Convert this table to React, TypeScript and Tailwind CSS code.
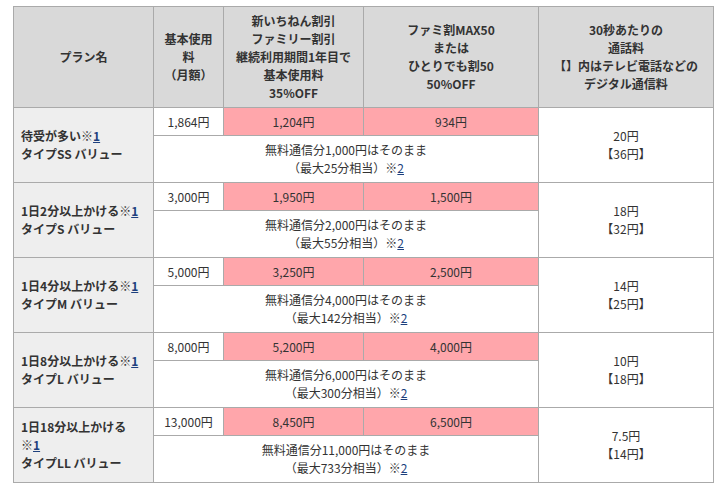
import React from 'react';

type Plan = {
  name: React.ReactNode;
  base: string;
  first: string;
  fami: string;
  free: string;
  max: string;
  call: string;
  digital: string;
};

const Ref = ({ n }: { n: number }) => (
  <>
    ※<a href="#" className="text-[#1d3f7d] underline">{n}</a>
  </>
);

const plans: Plan[] = [
  { name: <>待受が多い<Ref n={1} /><br />タイプSS バリュー</>, base: '1,864円', first: '1,204円', fami: '934円', free: '1,000', max: '25', call: '20円', digital: '36円' },
  { name: <>1日2分以上かける<Ref n={1} /><br />タイプS バリュー</>, base: '3,000円', first: '1,950円', fami: '1,500円', free: '2,000', max: '55', call: '18円', digital: '32円' },
  { name: <>1日4分以上かける<Ref n={1} /><br />タイプM バリュー</>, base: '5,000円', first: '3,250円', fami: '2,500円', free: '4,000', max: '142', call: '14円', digital: '25円' },
  { name: <>1日8分以上かける<Ref n={1} /><br />タイプL バリュー</>, base: '8,000円', first: '5,200円', fami: '4,000円', free: '6,000', max: '300', call: '10円', digital: '18円' },
  { name: <>1日18分以上かける<br /><Ref n={1} /><br />タイプLL バリュー</>, base: '13,000円', first: '8,450円', fami: '6,500円', free: '11,000', max: '733', call: '7.5円', digital: '14円' },
];

const cell = 'border border-[#aaaaaa]';

export default function App() {
  return (
    <div className="bg-white w-[714px] h-[493px] pt-[6px] pl-[13px] text-[#333333] text-[12px] leading-[18px] font-['Noto_Sans_CJK_JP','Noto_Sans',sans-serif]">
      <table className="border-collapse w-[700px] table-fixed">
        <colgroup>
          <col className="w-[140px]" />
          <col className="w-[70px]" />
          <col className="w-[140px]" />
          <col className="w-[175px]" />
          <col className="w-[175px]" />
        </colgroup>
        <thead>
          <tr className="h-[101px] bg-[#d9d9d9] font-bold">
            <th className={`${cell} text-center`}>プラン名</th>
            <th className={`${cell} text-center`}>基本使用<br />料<br />（月額）</th>
            <th className={`${cell} text-center`}>新いちねん割引<br />ファミリー割引<br />継続利用期間1年目で<br />基本使用料<br />35%OFF</th>
            <th className={`${cell} text-center`}>ファミ割MAX50<br />または<br />ひとりでも割50<br />50%OFF</th>
            <th className={`${cell} text-center`}>30秒あたりの<br />通話料<br />【】内はテレビ電話などの<br />デジタル通信料</th>
          </tr>
        </thead>
        <tbody>
          {plans.map((p, i) => (
            <React.Fragment key={i}>
              <tr className="h-[28px]">
                <td rowSpan={2} className={`${cell} bg-[#eeeeee] font-bold px-[7px]`}>{p.name}</td>
                <td className={`${cell} text-center`}>{p.base}</td>
                <td className={`${cell} text-center bg-[#ffa6ab]`}>{p.first}</td>
                <td className={`${cell} text-center bg-[#ffa6ab]`}>{p.fami}</td>
                <td rowSpan={2} className={`${cell} text-center`}>{p.call}<br />【{p.digital}】</td>
              </tr>
              <tr className="h-[47px]">
                <td colSpan={3} className={`${cell} text-center`}>
                  無料通信分{p.free}円はそのまま<br />（最大{p.max}分相当）<Ref n={2} />
                </td>
              </tr>
            </React.Fragment>
          ))}
        </tbody>
      </table>
    </div>
  );
}
